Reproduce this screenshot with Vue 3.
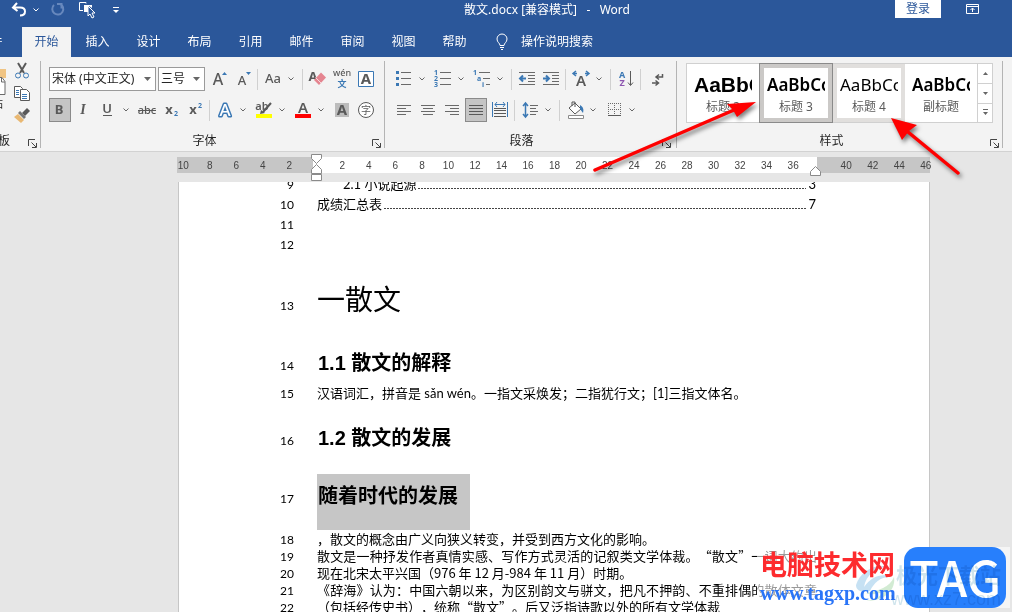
<script setup>
import { ref } from 'vue'

const svgText = (x, y, size, fill, t, extra = '') =>
  `<text x="${x}" y="${y}" font-size="${size}" fill="${fill}" text-anchor="middle" ${extra}>${t}</text>`
const stroke = (d, c = '#6a6a6a', w = 1) =>
  `<path d="${d}" fill="none" stroke="${c}" stroke-width="${w}"/>`
const fill = (d, c) => `<path d="${d}" fill="${c}"/>`

const GREY = '#595959'
const BLUE = '#3b78b4'
const bold = 'font-weight="700"'

const icons = {
  grow: svgText(11, 18, 16, GREY, 'A', 'font-weight="500"') + fill('M15 8l2.5-3 2.500 3z', BLUE),
  shrink: svgText(11, 18, 13, GREY, 'A', 'font-weight="500"') + fill('M15 5h5l-2.500 3z', BLUE),
  case: svgText(12, 16, 13, GREY, 'Aa', 'font-weight="500"'),
  clear: svgText(7, 14, 13, GREY, 'A', bold) + fill('M15 5.500l5 5-7 7.500-5-5z', '#e58590') + stroke('M9.500 10.500l5.500 5.500', '#f7dadd'),
  phonetic: svgText(12, 9, 9, GREY, 'wén', 'font-weight="500"') + svgText(12, 20, 9, BLUE, '文', bold),
  frame: '<path d="M4.500 4.500h15v15h-15z" fill="#fff" stroke="#3b78b4"/>' + svgText(12, 17, 15, GREY, 'A', bold),
  bold: svgText(11, 16, 13, GREY, 'B', bold),
  italic: svgText(11, 16, 14, GREY, 'I', 'font-style="italic" font-weight="700" style="font-family:\'Liberation Serif\',serif"'),
  underline: svgText(11, 15, 13, GREY, 'U', 'font-weight="600"') + stroke('M7 17.500h9', GREY),
  strike: svgText(12, 16, 11, GREY, 'abc', 'font-weight="500"') + stroke('M3 12.500h18', GREY),
  sub: svgText(10, 16, 13, GREY, 'x', bold) + svgText(17, 18, 7, BLUE, '2', bold),
  sup: svgText(10, 16, 13, GREY, 'x', bold) + svgText(17, 10, 7, BLUE, '2', bold),
  effect: svgText(12, 18, 17, '#fff', 'A', `font-weight="500" stroke="${BLUE}" stroke-width="3" stroke-linejoin="round" paint-order="stroke"`),
  highlight: svgText(10, 12, 11, GREY, 'ab', 'font-weight="600"') + stroke('M19 5l-8 9', GREY, 2) + fill('M9 12l4 3-5 1z', GREY) + fill('M4 16h16v4H4z', '#ffff00'),
  color: svgText(12, 15, 15, GREY, 'A', 'font-weight="600"') + fill('M4 16h16v4H4z', '#ff0000'),
  shade: fill('M5 5h14v14H5z', '#bcbcbc') + svgText(12, 17, 15, GREY, 'A', bold),
  circled: '<circle cx="12" cy="12" r="7.5" fill="#fff" stroke="#595959"/>' + svgText(12, 16, 10, GREY, '字'),
  bullets: fill('M4 4h3v3H4zM4 10h3v3H4zM4 16h3v3H4z', BLUE) + stroke('M9 5.500h10M9 11.500h10M9 17.500h10'),
  numbers: stroke('M9 5.500h11M9 11.500h11M9 17.500h11') + svgText(5, 8, 7, BLUE, '1', bold) + svgText(5, 14, 7, BLUE, '2', bold) + svgText(5, 20, 7, BLUE, '3', bold),
  levels: stroke('M9 5.500h11M13 11.500h7M16 17.500h4') + svgText(5, 8, 7, BLUE, '1', bold) + svgText(9, 14, 7, BLUE, 'a', bold) + svgText(13, 20, 7, BLUE, 'i', bold),
  outdent: stroke('M4 5.500h16M13 8.500h7M13 11.500h7M13 14.500h7M4 17.500h16') + stroke('M5 11.500h6M8 8.500l-3 3 3 3', BLUE, 2),
  indent: stroke('M4 5.500h16M13 8.500h7M13 11.500h7M13 14.500h7M4 17.500h16') + stroke('M4 11.500h6M7 8.500l3 3-3 3', BLUE, 2),
  scale: svgText(12, 19, 15, GREY, 'A', 'font-weight="600"') + stroke('M8 6.500H4M7 4L4 6.500 7 9M16 6.500h4M17 4l3 2.500L17 9', BLUE, 1.5),
  sort: svgText(8, 11, 9, BLUE, 'A', bold) + svgText(8, 19, 9, '#8d55b0', 'Z', bold) + stroke('M16.500 4v14M14 15.500l2.500 3 2.500-3', GREY),
  marks: stroke('M18.500 7v3h-6M15 7.500l-3 2.500 3 2.500M8 16h6M11.500 13.500l3 2.500-3 2.500', GREY, 1.5),
  left: stroke('M5 7.500h14M5 10.500h9M5 13.500h14M5 16.500h9'),
  center: stroke('M5 7.500h14M7 10.500h10M5 13.500h14M7 16.500h10'),
  right: stroke('M5 7.500h14M10 10.500h9M5 13.500h14M10 16.500h9'),
  justify: stroke('M5 7.500h14M5 10.500h14M5 13.500h14M5 16.500h14', '#595959'),
  distribute: stroke('M4.500 4v15M19.500 4v15', BLUE) + stroke('M7 6.500h10M9 4l-2 2.500L9 9M15 4l2 2.500L15 9', BLUE) + stroke('M6 10.500h12M6 12.500h12M6 15.500h12M6 18.500h12', GREY),
  spacing: stroke('M7.500 5v14M5 8l2.500-3L10 8M5 16l2.500 3 2.500-3', BLUE, 1.5) + stroke('M12 7.500h8M12 10.500h6M12 13.500h8M12 16.500h6'),
  bucket: '<path d="M6 10l6-5 6 6-6 5z" fill="#fff" stroke="#595959"/>' + stroke('M9 8V4h3v5', GREY) + fill('M17 7c3 2 4 4 3 8l-3-4z', BLUE) + '<path d="M5.500 17.500h15v3h-15z" fill="#fff" stroke="#8a8a8a"/>',
  borders: '<path d="M6.500 5v13M12.500 5v13M18.500 5v13M6 5.500h13M6 11.500h13" fill="none" stroke="#6a6a6a" stroke-dasharray="1 1"/>' + stroke('M6 17.500h13', GREY),
  cut: stroke('M8 3l6 10M16 3l-6 10', GREY, 2) + '<circle cx="8" cy="15.500" r="2.500" fill="none" stroke="#3b78b4"/><circle cx="16" cy="15.500" r="2.500" fill="none" stroke="#3b78b4"/>',
  copy: '<path d="M4.500 4.500h6l2 2v9h-8z" fill="#fff" stroke="#595959"/><path d="M10.500 7.500h6l3 3v8h-9z" fill="#fff" stroke="#595959"/>' + stroke('M6 8.500h3M6 10.500h3M6 12.500h3M12 12.500h5M12 14.500h5M12 16.500h5', BLUE),
  brush: fill('M17 4l3 3-5 5-3-3z', '#595959') + fill('M10 7l6 6-2 2-6-6z', '#777') + fill('M8 10l6 6-3 3-7-6z', '#e9b872'),
}

const fontRow1 = ['grow', 'shrink', '|', 'case', 'v', '|', 'clear', 'phonetic', 'frame']
const fontRow2 = ['bold', 'italic', 'underline', 'v', 'strike', 'sub', 'sup', '|', 'effect', 'v', 'highlight', 'v', 'color', 'v', 'shade', 'circled']
const paraRow1 = ['bullets', 'v', 'numbers', 'v', 'levels', 'v', '|', 'outdent', 'indent', '|', 'scale', 'v', '|', 'sort', '|', 'marks']
const paraRow2 = ['left', 'center', 'right', 'justify', 'distribute', '|', 'spacing', 'v', '|', 'bucket', 'v', 'borders', 'v']
const pressed = ref(new Set(['bold', 'justify']))
const toggle = (name) => {
  if (pressed.value.has(name)) pressed.value.delete(name)
  else pressed.value.add(name)
}

const tabs = ['文件', '开始', '插入', '设计', '布局', '引用', '邮件', '审阅', '视图', '帮助']
const activeTab = ref('开始')

const styles = [
  { name: '标题 2', kind: 'arial' },
  { name: '标题 3', kind: 'strong' },
  { name: '标题 4', kind: 'plain' },
  { name: '副标题', kind: 'strong' },
]
const activeStyle = ref('标题 3')

const ticks = Array.from({ length: 29 }, (_, i) => {
  const n = Math.abs(i * 2 - 10)
  return n === 0 || i === 24 ? '' : n
})

const lines = [
  { n: 9, kind: 'toc', text: '2.1 小说起源', page: 3, nested: true },
  { n: 10, kind: 'toc', text: '成绩汇总表', page: 7 },
  { n: 11, kind: 'toc', text: '\u00a0' },
  { n: 12, kind: 'toc', text: '\u00a0' },
  { n: 13, kind: 'h1', text: '一散文' },
  { n: 14, kind: 'h2', text: '1.1 散文的解释' },
  { n: 15, kind: 'lead', text: '汉语词汇，拼音是 sǎn wén。一指文采焕发；二指犹行文；[1]三指文体名。' },
  { n: 16, kind: 'h2', text: '1.2 散文的发展' },
  { n: 17, kind: 'h3', text: '随着时代的发展' },
  { n: 18, kind: 'body', text: '，散文的概念由广义向狭义转变，并受到西方文化的影响。' },
  { n: 19, kind: 'body', full: true, text: '散文是一种抒发作者真情实感、写作方式灵活的记叙类文学体裁。“散文”一词大约出' },
  { n: 20, kind: 'body', text: '现在北宋太平兴国（976 年 12 月-984 年 11 月）时期。' },
  { n: 21, kind: 'body', full: true, text: '《辞海》认为：中国六朝以来，为区别韵文与骈文，把凡不押韵、不重排偶的散体文章' },
  { n: 22, kind: 'body', text: '（包括经传史书），统称“散文”。后又泛指诗歌以外的所有文学体裁' },
]
const tagFor = (k) => (k === 'h1' ? 'h1' : k === 'h2' ? 'h2' : k === 'h3' ? 'h3' : 'p')
</script>

<template>
  <div class="word" lang="zh-CN">
    <header class="titlebar">
      <div class="quick">
        <button class="q undo" aria-label="撤消"><svg width="18" height="18" viewBox="0 0 18 18"><path d="M7 2L3 6.500 7.500 10M3.500 6.500H10c3 0 5 1.500 5 4s-2 4-5 4" fill="none" stroke="#fff" stroke-width="2" /></svg></button>
        <button class="q more" aria-label="撤消选项"><svg width="8" height="6" viewBox="0 0 8 6"><path d="M1.500 1.500L4 4l2.500-2.500" fill="none" stroke="#fff" /></svg></button>
        <button class="q redo" aria-label="重复"><svg width="18" height="18" viewBox="0 0 18 18"><path d="M6 4a5.500 5.500 0 1 0 6-1M9 3h4.500v4.500" fill="none" stroke="#6788bd" stroke-width="2" /></svg></button>
        <button class="q pick" aria-label="选择对象"><svg width="18" height="18" viewBox="0 0 18 18"><path d="M8 2.500V1.500H1.500v8H5" fill="none" stroke="#fff" /><path d="M6 4h8v3l-3-2v6H6z" fill="#fff" /><path d="M10 5v10l2-2 2 4 2-1-2-4h3z" fill="#2b579a" stroke="#fff" /></svg></button>
        <button class="q custom" aria-label="自定义快速访问工具栏"><svg width="8" height="8" viewBox="0 0 8 8"><path d="M1 1.500h6" stroke="#fff" /><path d="M1 4h6L4 7z" fill="#fff" /></svg></button>
      </div>
      <div class="title">散文.docx [兼容模式]&nbsp;&nbsp; -&nbsp;&nbsp; Word</div>
      <div class="account">
        <button class="login">登录</button>
        <button class="display" aria-label="功能区显示选项"><svg width="14" height="12" viewBox="0 0 14 12"><path d="M.5 1.500h12v9H.5zM.5 3.500h12M6.500 9V5M4.500 7l2-2 2 2" fill="none" stroke="#fff" /></svg></button>
      </div>
    </header>

    <nav class="tabs">
      <button v-for="t in tabs" :key="t" class="tab" :class="{ on: t === activeTab }" @click="activeTab = t">{{ t }}</button>
      <button class="tell">
        <svg width="14" height="18" viewBox="0 0 14 18"><path d="M5 12.500c0-2.500-3-3-3-6.500a5 5 0 0 1 10 0c0 3.500-3 4-3 6.500zM5 14.500h4M6 16.500h2" fill="none" stroke="#fff" /></svg>
        操作说明搜索
      </button>
    </nav>

    <div class="ribbon">
      <section class="group clip">
        <div class="clip-body">
          <button class="paste" aria-label="粘贴">
            <svg width="8" height="30" viewBox="0 0 8 30"><path d="M0 4h6v9H0z" fill="#f0c483" /><path d="M-3 12.500h5l3 4v13h-8z" fill="#fff" stroke="#6a6a6a" /><path d="M1.500 13v4H5" fill="none" stroke="#6a6a6a" /></svg>
            <span>粘贴</span>
          </button>
          <div class="clip-tools">
            <button v-for="i in ['cut', 'copy', 'brush']" :key="i" :aria-label="i"><svg width="24" height="24" viewBox="0 0 24 24" v-html="icons[i]" /></button>
          </div>
        </div>
        <footer class="caption"><span>剪贴板</span><button class="launch" aria-label="剪贴板选项"><svg width="9" height="9" viewBox="0 0 9 9"><path d="M.5 7V.5H7M3.500 3.500L8 8M8.500 4v4.500H4" fill="none" stroke="#444" /></svg></button></footer>
      </section>

      <section class="group font-group">
        <div class="row">
          <label class="combo wide"><select aria-label="字体"><option>宋体 (中文正文)</option></select><svg width="7" height="4" viewBox="0 0 7 4"><path d="M0 0h7L3.500 4z" fill="#666" /></svg></label>
          <label class="combo"><select aria-label="字号"><option>三号</option></select><svg width="7" height="4" viewBox="0 0 7 4"><path d="M0 0h7L3.500 4z" fill="#666" /></svg></label>
          <template v-for="(i, k) in fontRow1" :key="k">
            <span v-if="i === '|'" class="sep"></span>
            <button v-else-if="i === 'v'" class="arrow" aria-label="更多"><svg width="8" height="6" viewBox="0 0 8 6"><path d="M1.500 1.500L4 4l2.500-2.500" /></svg></button>
            <button v-else class="tool" :aria-label="i"><svg width="24" height="24" viewBox="0 0 24 24" v-html="icons[i]" /></button>
          </template>
        </div>
        <div class="row">
          <template v-for="(i, k) in fontRow2" :key="k">
            <span v-if="i === '|'" class="sep"></span>
            <button v-else-if="i === 'v'" class="arrow" aria-label="更多"><svg width="8" height="6" viewBox="0 0 8 6"><path d="M1.500 1.500L4 4l2.500-2.500" /></svg></button>
            <button v-else class="tool" :class="{ on: pressed.has(i) }" :aria-label="i" @click="toggle(i)"><svg width="24" height="24" viewBox="0 0 24 24" v-html="icons[i]" /></button>
          </template>
        </div>
        <footer class="caption"><span>字体</span><button class="launch" aria-label="字体选项"><svg width="9" height="9" viewBox="0 0 9 9"><path d="M.5 7V.5H7M3.500 3.500L8 8M8.500 4v4.500H4" fill="none" stroke="#444" /></svg></button></footer>
      </section>

      <section class="group para-group">
        <div v-for="(row, r) in [paraRow1, paraRow2]" :key="r" class="row">
          <template v-for="(i, k) in row" :key="k">
            <span v-if="i === '|'" class="sep"></span>
            <button v-else-if="i === 'v'" class="arrow" aria-label="更多"><svg width="8" height="6" viewBox="0 0 8 6"><path d="M1.500 1.500L4 4l2.500-2.500" /></svg></button>
            <button v-else class="tool" :class="{ on: pressed.has(i) }" :aria-label="i"><svg width="24" height="24" viewBox="0 0 24 24" v-html="icons[i]" /></button>
          </template>
        </div>
        <footer class="caption"><span>段落</span><button class="launch" aria-label="段落选项"><svg width="9" height="9" viewBox="0 0 9 9"><path d="M.5 7V.5H7M3.500 3.500L8 8M8.500 4v4.500H4" fill="none" stroke="#444" /></svg></button></footer>
      </section>

      <section class="group gallery-group">
        <div class="gallery">
          <button v-for="s in styles" :key="s.name" class="style" :class="{ on: s.name === activeStyle, hover: s.name === '标题 4' }" @click="activeStyle = s.name">
            <span class="sample" :class="s.kind">AaBbCc</span>
            <span class="name">{{ s.name }}</span>
          </button>
          <div class="scroll">
            <button aria-label="上一行"><svg width="7" height="7" viewBox="0 0 7 7"><path d="M1 5h5L3.500 2z" /></svg></button>
            <button aria-label="下一行"><svg width="7" height="7" viewBox="0 0 7 7"><path d="M1 2h5L3.500 5z" /></svg></button>
            <button aria-label="其他"><svg width="7" height="7" viewBox="0 0 7 7"><path d="M1 0h5v1H1zM1 3h5L3.500 6z" /></svg></button>
          </div>
        </div>
        <footer class="caption"><span>样式</span><button class="launch" aria-label="样式选项"><svg width="9" height="9" viewBox="0 0 9 9"><path d="M.5 7V.5H7M3.500 3.500L8 8M8.500 4v4.500H4" fill="none" stroke="#444" /></svg></button></footer>
      </section>
    </div>

    <main class="workspace">
      <div class="ruler">
        <div class="ticks"><span v-for="(t, i) in ticks" :key="i">{{ t }}</span></div>
        <svg class="marker first" width="13" height="30" viewBox="0 0 13 30"><path d="M1.500 1.500h10v4l-5 5-5-5zM1.500 20.500v-4l5-5 5 5v4zM1.500 21.500h10v6h-10z" fill="#fff" stroke="#8a8a8a" /></svg>
        <svg class="marker last" width="13" height="30" viewBox="0 0 13 30"><path d="M1.500 22.500v-4l5-5 5 5v4z" fill="#fff" stroke="#8a8a8a" /></svg>
      </div>

      <article class="page">
        <div v-for="l in lines" :key="l.n" class="line" :class="[l.kind, { nested: l.nested, full: l.full }]">
          <span class="num">{{ l.n }}</span>
          <component :is="tagFor(l.kind)" class="text"><span>{{ l.text }}</span><template v-if="l.page"><i class="leader"></i><span>{{ l.page }}</span></template></component>
        </div>
      </article>
    </main>

    <svg class="pointers" width="380" height="90" viewBox="0 0 380 90">
      <g class="pointer">
        <path d="M7 73L146 13" stroke="#fe0000" stroke-width="3.5" stroke-linecap="round" />
        <path d="M168 5L139 7L145 13L149 20z" fill="#fe0000" />
        <path d="M370 76L320 35" stroke="#fe0000" stroke-width="3.5" stroke-linecap="round" />
        <path d="M303 21L329 28L321 34L314 43z" fill="#fe0000" />
      </g>
    </svg>

    <aside class="brand">
      <svg class="swirl" width="42" height="44" viewBox="0 0 42 44"><path d="M2 24C6 10 22 2 34 6C22 6 12 14 10 26C18 14 30 12 36 16C26 16 20 22 16 30C8 32 2 30 2 24z" fill="#8fc4e8" /><path d="M40 16C42 28 32 40 12 40C22 38 28 34 30 30C24 34 16 34 12 32C24 30 36 26 40 16z" fill="#a6d8a8" /></svg>
      <div class="site"><strong>电脑技术网</strong><span>www.tagxp.com</span></div>
      <div class="tag">TAG</div>
      <div class="faint"><span>极光下载站</span><small>www.xz7.com</small></div>
    </aside>
  </div>
</template>

<style>
html, body { height: 100%; overflow: hidden; }
#app { height: 100%; }
</style>

<style scoped>
.word {
  position: relative;
  display: flex;
  flex-direction: column;
  height: 100%;
  overflow: hidden;
  background: #e6e6e6;
  color: #262626;
  font: 12px/16px "Noto Sans", "Noto Sans CJK SC", sans-serif;
}
button { margin: 0; padding: 0; border: 0; background: none; color: inherit; font: inherit; display: flex; align-items: center; justify-content: center; flex: none; }
svg { display: block; flex: none; }

.titlebar { display: flex; background: #2b579a; color: #fff; height: 27px; flex: none; }
.quick { display: flex; width: 199px; height: 19px; padding-left: 10px; box-sizing: border-box; flex: none; }
.q { height: 19px; width: 18px; }
.more { width: 16px; margin-right: 4px; }
.pick { margin-left: 12px; }
.custom { width: 12px; margin-left: 14px; }
.title { flex: 1; text-align: center; line-height: 20px; }
.account { display: flex; width: 117px; flex: none; }
.login { width: 46px; height: 18px; background: #fff; color: #2b579a; }
.display { width: 28px; height: 17px; margin-left: 18px; }

.tabs { display: flex; background: #2b579a; color: #fff; height: 30px; flex: none; overflow: hidden; }
.tab { width: 49px; margin: 0 1px; }
.tab:first-child { margin-left: -34px; margin-right: 6px; }
.tab.on { background: #f3f3f3; color: #2b579a; }
.tell { gap: 12px; margin-left: 15px; }

.ribbon { display: flex; background: #f3f3f3; padding: 4px 0 3px; border-bottom: 1px solid #d2d2d2; flex: none; }
.group { display: flex; flex-direction: column; gap: 7px; padding: 6px 6px 0 7px; border-right: 1px solid #b4b4b4; min-height: 81px; flex: none; }
.para-group { padding-right: 8px; }
.row { display: flex; height: 24px; align-items: center; }
.tool { width: 24px; height: 24px; }
.tool.on { width: 22px; margin: 0 1px; background: #c5c5c5; box-shadow: inset 0 0 0 1px #8a8a8a; }
.arrow { width: 12px; height: 24px; margin-right: 3px; }
.arrow path { fill: none; stroke: #666; }
.sep { width: 1px; height: 21px; margin: 0 3px 0 2px; background: #d0d0d0; }
.caption { display: flex; margin: auto -6px 0 -7px; height: 14px; line-height: 14px; }
.caption span { flex: 1; text-align: center; }
.launch { width: 16px; height: 18px; }

.combo { display: grid; grid-template-columns: 1fr 15px; align-items: center; width: 47px; height: 24px; margin-right: 2px; background: #fff; border: 1px solid #9a9a9a; box-sizing: border-box; }
.combo.wide { width: 107px; margin-left: 1px; }
.combo select { grid-area: 1 / 1 / 2 / 3; appearance: none; border: 0; background: none; margin: 0; padding: 0 2px; height: 22px; font: inherit; color: #262626; }
.combo svg { grid-area: 1 / 2; pointer-events: none; margin-left: 4px; }

.clip { width: 40px; padding: 0; overflow: hidden; }
.clip-body { display: flex; }
.paste { width: 10px; flex-direction: column; align-items: flex-start; justify-content: flex-start; padding-top: 4px; overflow: hidden; }
.paste span { margin-left: -21px; margin-top: 1px; white-space: nowrap; }
.clip-tools button { width: 24px; height: 22px; }
.clip .caption { margin: auto 0 0; justify-content: flex-end; }
.clip .caption span { flex: none; margin-right: 15px; }
.clip .launch { width: 15px; }

.gallery-group { padding: 2px 9px 0 9px; }
.gallery-group .caption { margin: auto -9px 0 -9px; }
.gallery { display: flex; background: #fff; border: 1px solid #d0d0d0; height: 58px; }
.style { width: 72px; height: 58px; flex-direction: column; box-sizing: border-box; padding: 0 3px; border: 4px solid transparent; margin-right: 1px; }
.style.hover { border-color: #e1dfdd; }
.style.on { border-color: #cbc9c7; box-shadow: 0 0 0 1px #8a8a8a; }
.style:nth-child(n + 3) { margin-right: 0; }
.sample { width: 100%; overflow: hidden; color: #000; line-height: 24px; text-align: left; white-space: nowrap; font-size: 17px; margin-top: 4px; }
.sample.arial { font-family: "Liberation Sans", sans-serif; font-size: 21px; font-weight: 700; }
.sample.strong { font-weight: 600; }
.name { color: #5a5a5a; line-height: 20px; }
.scroll { display: grid; grid-template-rows: repeat(3, 1fr); width: 14px; border-left: 1px solid #d0d0d0; }
.scroll button + button { border-top: 1px solid #d0d0d0; }
.scroll path { fill: #666; }

.workspace { flex: 1; min-height: 0; display: flex; flex-direction: column; padding: 5px 82px 0 177px; overflow: hidden; }
.ruler { position: relative; height: 16px; flex: none; margin-bottom: 9px; background: linear-gradient(90deg, #c6c6c6 0 18%, #fff 18% 85%, #c6c6c6 85%); }
.ticks { display: grid; grid-template-columns: repeat(29, 1fr); margin: 0 -9px 0 -7px; font: 10px/17px "Liberation Sans", sans-serif; color: #444; text-align: center; }
.marker { position: absolute; top: -4px; }
.first { left: 133px; }
.last { right: 108px; }

.page { flex: 1; min-height: 0; overflow: hidden; background: #fff; border: solid #c6c6c6; border-width: 0 1px; margin-left: 1px; padding-right: 112px; color: #000; font: 13px/20px "Noto Sans CJK SC", sans-serif; text-spacing-trim: space-all; }
.line { display: grid; grid-template-columns: 115px minmax(0, 1fr); column-gap: 23px; align-items: baseline; }
.line:first-child { margin-top: -8px; }
.num { text-align: right; font: 12px/14px Lato, sans-serif; }
.text { margin: 0; font: inherit; white-space: nowrap; }
.toc { height: 20px; }
.toc .text { display: flex; align-items: baseline; gap: 2px; padding-right: 1px; font-family: Lato, "Noto Sans CJK SC", sans-serif; }
.nested .text { padding-left: 26px; }
.leader { flex: 1; height: 1px; background: repeating-linear-gradient(90deg, #444 0 2px, #fff 2px 3px); }
.h1 { margin-top: 14px; padding-bottom: 2px; }
.h1 .text { font-size: 28px; line-height: 60px; }
.h2 { margin-top: 15px; }
.h2 .text { font: 700 20px/36px "Liberation Sans", "Noto Sans CJK SC", sans-serif; padding-left: 1px; }
.lead .text { line-height: 24px; font-family: Lato, "Noto Sans CJK SC", sans-serif; }
.h3 { margin-top: 18px; }
.h3 .text { justify-self: start; font-weight: 700; font-size: 20px; line-height: 42px; padding: 0 12px 14px 1px; background: #c6c6c6; }
.body .text { line-height: 17px; }
.full .text { text-align: justify; text-align-last: justify; }

.pointers { position: absolute; left: 588px; top: 97px; pointer-events: none; }
.pointer { filter: drop-shadow(2px 3px 2px rgba(0, 0, 0, .5)); }

.brand { position: absolute; right: 2px; bottom: 4px; width: 253px; height: 61px; background: rgba(255, 255, 255, .6); }
.site { position: absolute; left: 3px; top: 1px; white-space: nowrap; }
.site strong { display: block; font: 700 27px/32px "Noto Sans CJK SC", sans-serif; color: #fd2b2e; }
.site span { display: block; font: 700 20px/26px "Liberation Serif", serif; color: #2a75f8; }
.swirl { position: absolute; left: 97px; top: 14px; opacity: .5; }
.faint { position: absolute; right: 9px; top: 12px; text-align: right; color: #3f93b4; opacity: .25; mix-blend-mode: multiply; }
.faint span { display: block; font: 700 21px/30px "Noto Sans CJK SC", sans-serif; }
.faint small { display: block; font: 18px/20px "Liberation Sans", sans-serif; }
.tag { position: absolute; right: 4px; top: 0; width: 102px; height: 61px; border-radius: 14px; background: #277ffc; color: #fff; text-align: center; font: 500 49px/58px "Noto Sans CJK SC", sans-serif; }
</style>
